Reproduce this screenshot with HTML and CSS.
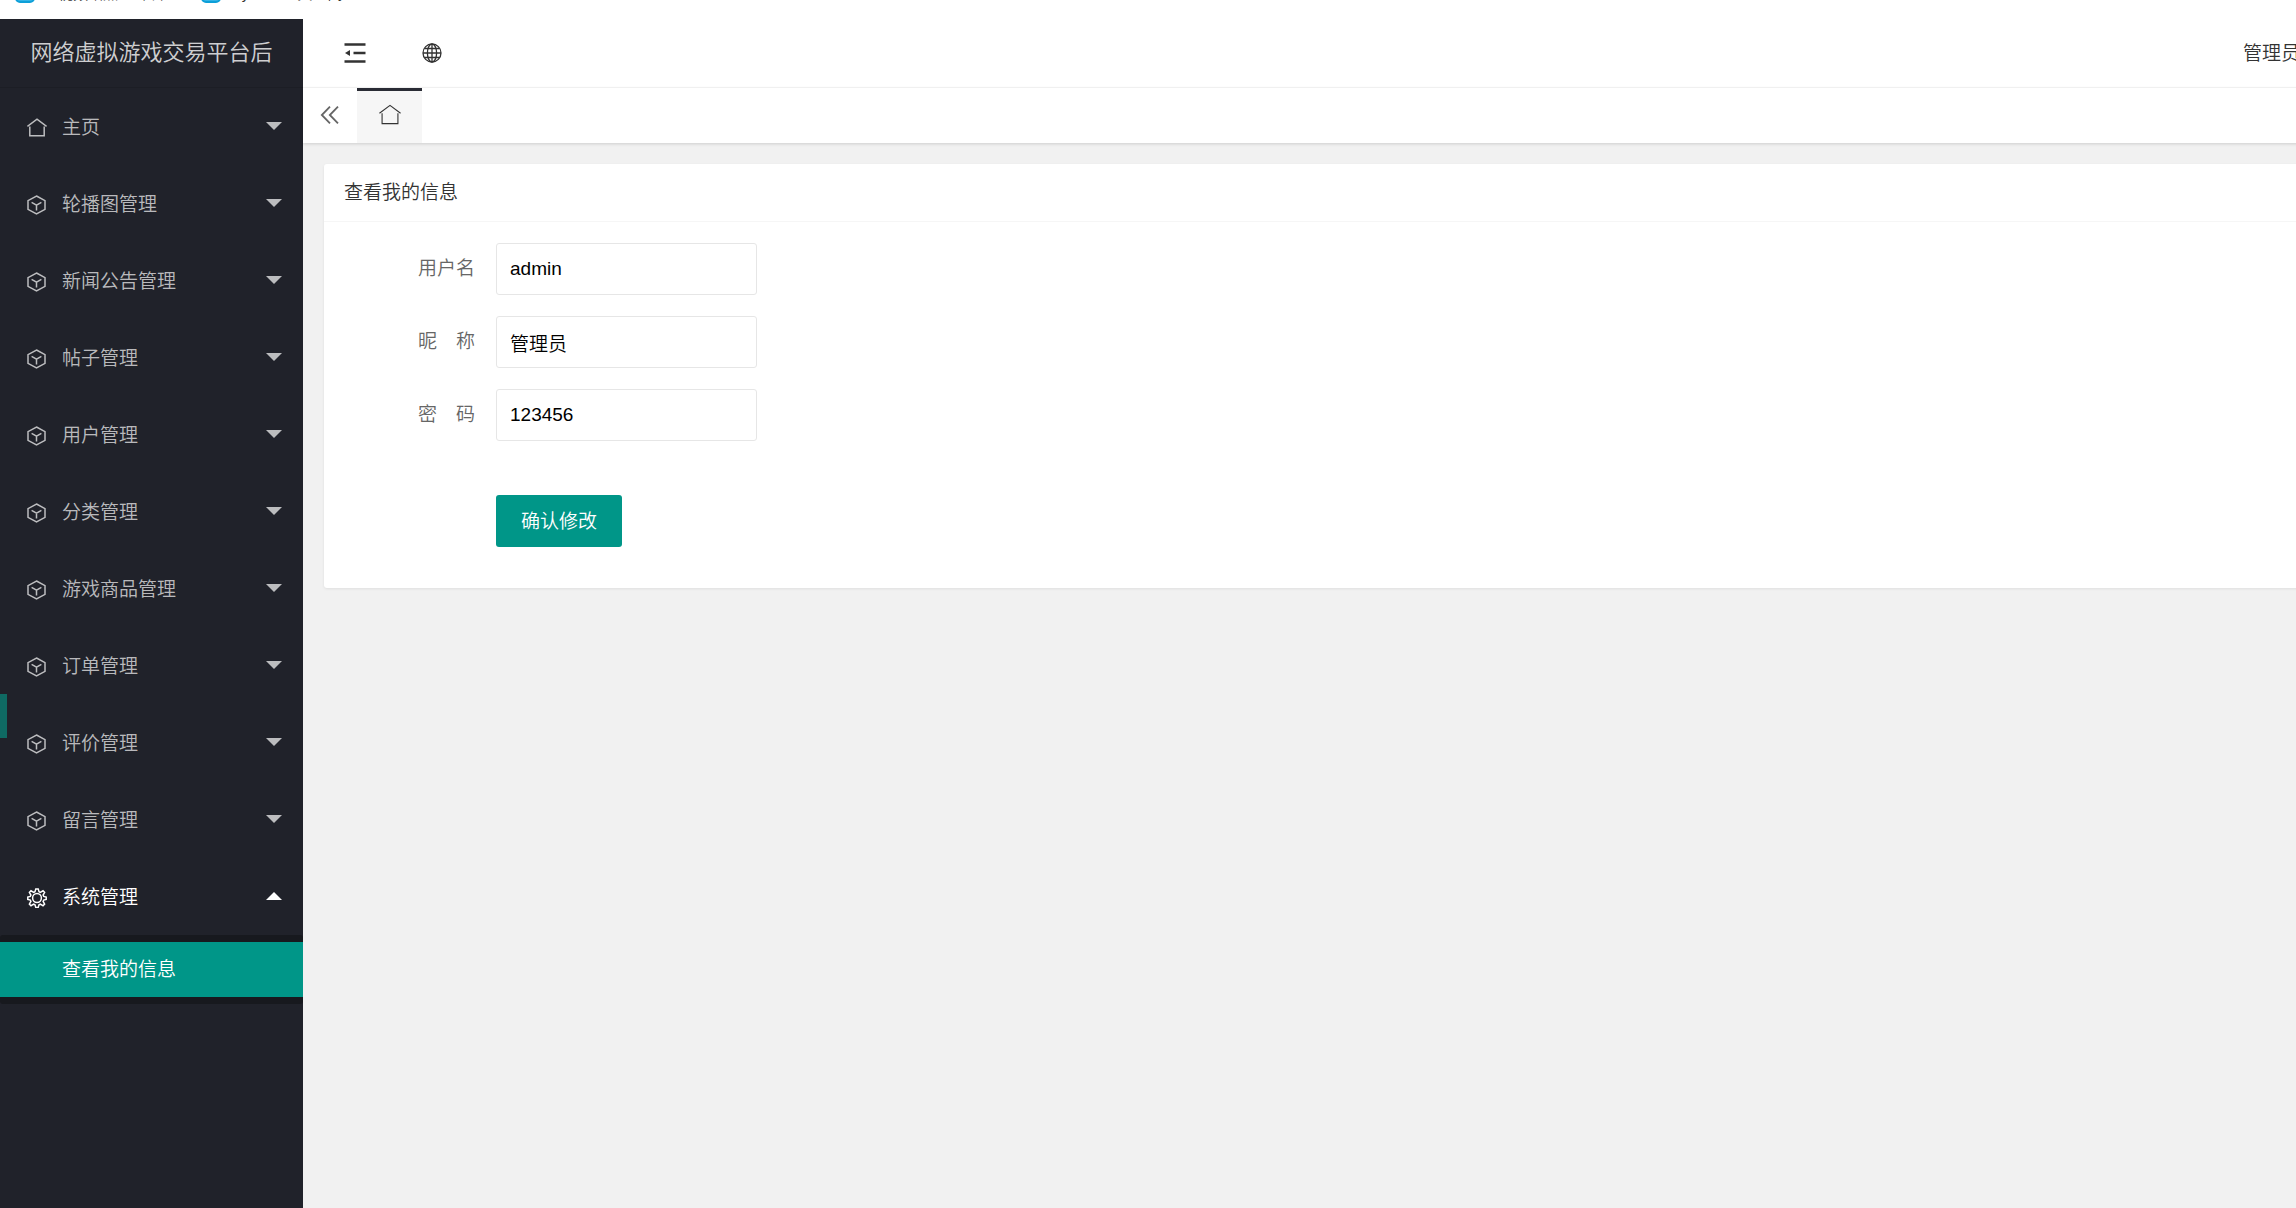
FILE: index.html
```html
<!DOCTYPE html>
<html lang="zh-CN">
<head>
    <meta charset="UTF-8">
    <title>网络虚拟游戏交易平台后台</title>
    <link rel="stylesheet" href="styles.css">
</head>
<body>
    <svg class="defs" width="0" height="0" aria-hidden="true">
        <symbol id="home" viewBox="0 0 20 20">
            <path d="M.4 8.4 10 1.2l9.6 7.2M2.8 8.4v9.4h14.4V8.4"/>
        </symbol>
        <symbol id="cube" viewBox="0 0 20 20">
            <path d="M9.5 1 18 5.6v8.8L9.5 19 1 14.4V5.6zM4.6 7.4l4.9 2.8 4.9-2.8M9.5 10.2v5.4"/>
        </symbol>
        <symbol id="gear" viewBox="0 0 20 20">
            <circle cx="10" cy="10" r="4.4"/>
            <path d="M8.8 .9h2.4l.8 2.8 1.3.6 2.7-1.5 1.6 1.6-1.5 2.7.6 1.3 2.5.6v2.4l-2.5.7-.6 1.3 1.5 2.7-1.6 1.6-2.7-1.5-1.3.6-.8 2.6H8.8l-.8-2.6-1.3-.6L4 17.7l-1.6-1.6 1.5-2.7-.6-1.3-2.5-.7V9l2.5-.6.6-1.3L2.4 4.4 4 2.8l2.7 1.5L8 3.7z"/>
        </symbol>
    </svg>

    <div class="bookmarks">
        <a href="#"><i class="site"></i>【视频站点】 书库</a>
        <a href="#"><i class="site"></i>My Home 大空间</a>
    </div>

    <div class="layout">
        <div class="side">
            <div class="logo">网络虚拟游戏交易平台后</div>
            <ul class="nav">
                <li><a href="#"><svg class="icon"><use href="#home"/></svg>主页<span class="more"></span></a></li>
                <li><a href="#"><svg class="icon"><use href="#cube"/></svg>轮播图管理<span class="more"></span></a></li>
                <li><a href="#"><svg class="icon"><use href="#cube"/></svg>新闻公告管理<span class="more"></span></a></li>
                <li><a href="#"><svg class="icon"><use href="#cube"/></svg>帖子管理<span class="more"></span></a></li>
                <li><a href="#"><svg class="icon"><use href="#cube"/></svg>用户管理<span class="more"></span></a></li>
                <li><a href="#"><svg class="icon"><use href="#cube"/></svg>分类管理<span class="more"></span></a></li>
                <li><a href="#"><svg class="icon"><use href="#cube"/></svg>游戏商品管理<span class="more"></span></a></li>
                <li><a href="#"><svg class="icon"><use href="#cube"/></svg>订单管理<span class="more"></span></a></li>
                <li class="hover"><a href="#"><svg class="icon"><use href="#cube"/></svg>评价管理<span class="more"></span></a></li>
                <li><a href="#"><svg class="icon"><use href="#cube"/></svg>留言管理<span class="more"></span></a></li>
                <li class="open">
                    <a href="#"><svg class="icon"><use href="#gear"/></svg>系统管理<span class="more"></span></a>
                    <div class="child">
                        <a class="this" href="#">查看我的信息</a>
                    </div>
                </li>
            </ul>
        </div>

        <div class="main">
            <div class="header">
                <button class="tool" type="button" aria-label="侧边伸缩">
                    <svg class="tool-icon" viewBox="0 0 22 22"><path class="thick" d="M.5 2.5h21M9.5 11h12M.5 19.5h21"/><path class="solid" d="M1 11l5-3v6z"/></svg>
                </button>
                <button class="tool" type="button" aria-label="前台">
                    <svg class="tool-icon" viewBox="0 0 22 22"><circle cx="11" cy="11" r="9"/><ellipse cx="11" cy="11" rx="4.6" ry="9"/><path d="M11 2v18M2 11h18M3.8 6.5h14.4M3.8 15.5h14.4"/></svg>
                </button>
                <a class="user" href="#">管理员</a>
            </div>
            <div class="tabs">
                <button class="prev" type="button" aria-label="向左">
                    <svg class="tool-icon" viewBox="0 0 22 22"><path d="M11 1.8 2 11l9 9.2M19.8 1.8 10.8 11l9 9.2"/></svg>
                </button>
                <a class="tab" href="#" aria-label="主页"><svg class="tool-icon"><use href="#home"/></svg></a>
            </div>

            <div class="content">
                <div class="card">
                    <div class="card-title">查看我的信息</div>
                    <form class="form">
                        <div class="item">
                            <label for="username">用户名</label>
                            <input type="text" id="username" name="username" value="admin">
                        </div>
                        <div class="item">
                            <label for="cx">昵&emsp;称</label>
                            <input type="text" id="cx" name="cx" value="管理员">
                        </div>
                        <div class="item">
                            <label for="pwd">密&emsp;码</label>
                            <input type="text" id="pwd" name="pwd" value="123456">
                        </div>
                        <div class="action">
                            <button class="btn" type="button">确认修改</button>
                        </div>
                    </form>
                </div>
            </div>
        </div>
    </div>
</body>
</html>
```
FILE: styles.css
```css
*{
	box-sizing: border-box;
}
body{
	margin: 0;
	height: 100vh;
	display: flex;
	flex-direction: column;
	overflow: hidden;
	background: #f1f1f1;
	color: #333;
	font-family: "Liberation Sans", "Noto Sans CJK SC", sans-serif;
	font-size: 19px;
	font-weight: 350;
}
a{
	color: inherit;
	text-decoration: none;
}
button{
	padding: 0;
	border: 0;
	background: none;
	color: inherit;
	font: inherit;
}
svg{
	fill: none;
	stroke: currentColor;
}
.defs{
	position: absolute;
}

/* 书签栏 */
.bookmarks{
	flex: none;
	display: flex;
	align-items: flex-end;
	gap: 34px;
	height: 19px;
	padding: 0 15px 15px;
	overflow: hidden;
	background: #fff;
	font-size: 15px;
	line-height: 20px;
}
.bookmarks a{
	display: flex;
	align-items: flex-end;
	gap: 8px;
}
.site{
	width: 20px;
	height: 20px;
	margin-bottom: 1px;
	border: 2px solid #0d9fd8;
	border-radius: 5px;
	background: #35b4e6;
}

.layout{
	flex: 1;
	display: flex;
	min-height: 0;
}

/* 左侧菜单 */
.side{
	flex: none;
	width: 303px;
	background: #20222a;
	color: rgba(255,255,255,.7);
}
.logo{
	height: 69px;
	border-bottom: 1px solid #1c1e25;
	font-size: 22px;
	line-height: 68px;
	text-align: center;
	color: rgba(255,255,255,.8);
}
.nav{
	margin: 0;
	padding: 0;
	list-style: none;
}
.nav li{
	position: relative;
}
.nav li > a{
	display: flex;
	align-items: center;
	height: 77px;
	padding: 0 21px 2px 27px;
}
.icon{
	width: 20px;
	height: 20px;
	margin: 4px 15px 0 0;
	stroke-width: 1.5;
}
.more{
	margin-left: auto;
	border: 8px solid transparent;
	border-top-color: currentColor;
	border-bottom-width: 0;
}
.open .more{
	border-width: 0 8px 8px;
	border-bottom-color: currentColor;
}
.open{
	color: #fff;
}
.hover::before{
	content: "";
	position: absolute;
	left: 0;
	top: -10px;
	width: 7px;
	height: 44px;
	background: #0f6a63;
}
.child{
	padding: 7px 0;
	border-radius: 3px;
	background: #17191e;
}
.this{
	display: block;
	padding-left: 62px;
	background: #009688;
	line-height: 55px;
}

/* 右侧主体，比窗口略宽 */
.main{
	flex: 1;
	min-width: 0;
	margin-right: -40px;
}
.header{
	display: flex;
	align-items: center;
	height: 69px;
	padding: 0 36px 0 13px;
	border-bottom: 1px solid #f6f6f6;
	background: #fff;
}
.tool{
	display: flex;
	justify-content: center;
	width: 77px;
}
.tool-icon{
	width: 22px;
	height: 22px;
	stroke-width: 1.3;
}
.thick{
	stroke-width: 2.6;
}
.solid{
	fill: currentColor;
	stroke: none;
}
.user{
	margin-left: auto;
	padding-bottom: 4px;
}
.tabs{
	display: flex;
	height: 55px;
	background: #fff;
	box-shadow: 0 1px 3px rgba(0,0,0,.15);
}
.prev{
	display: flex;
	align-items: center;
	justify-content: center;
	width: 54px;
	padding-bottom: 2px;
	color: #666;
}
.prev svg{
	width: 20px;
	stroke-width: 2;
}
.tab{
	display: flex;
	align-items: center;
	justify-content: center;
	width: 65px;
	padding-bottom: 4px;
	border-top: 3px solid #292b34;
	background: #f6f6f6;
}
.tab svg{
	stroke-width: 1;
}
.content{
	padding: 21px;
}
.card{
	border-radius: 3px;
	background: #fff;
	box-shadow: 0 1px 3px rgba(0,0,0,.08);
}
.card-title{
	padding: 0 20px;
	border-bottom: 1px solid #f6f6f6;
	line-height: 57px;
}
.form{
	padding: 21px 20px 41px;
}
.item{
	display: flex;
	margin-bottom: 21px;
}
.item label{
	width: 152px;
	padding-right: 21px;
	text-align: right;
	line-height: 52px;
	color: #666;
}
.item input{
	width: 261px;
	height: 52px;
	padding: 0 13px;
	border: 1px solid #e6e6e6;
	border-radius: 3px;
	background: #fff;
	color: #000;
	font: inherit;
}
.action{
	padding: 33px 0 0 152px;
}
.btn{
	display: block;
	height: 52px;
	padding: 0 25px 3px;
	border-radius: 3px;
	background: #009688;
	color: #fff;
}
```
